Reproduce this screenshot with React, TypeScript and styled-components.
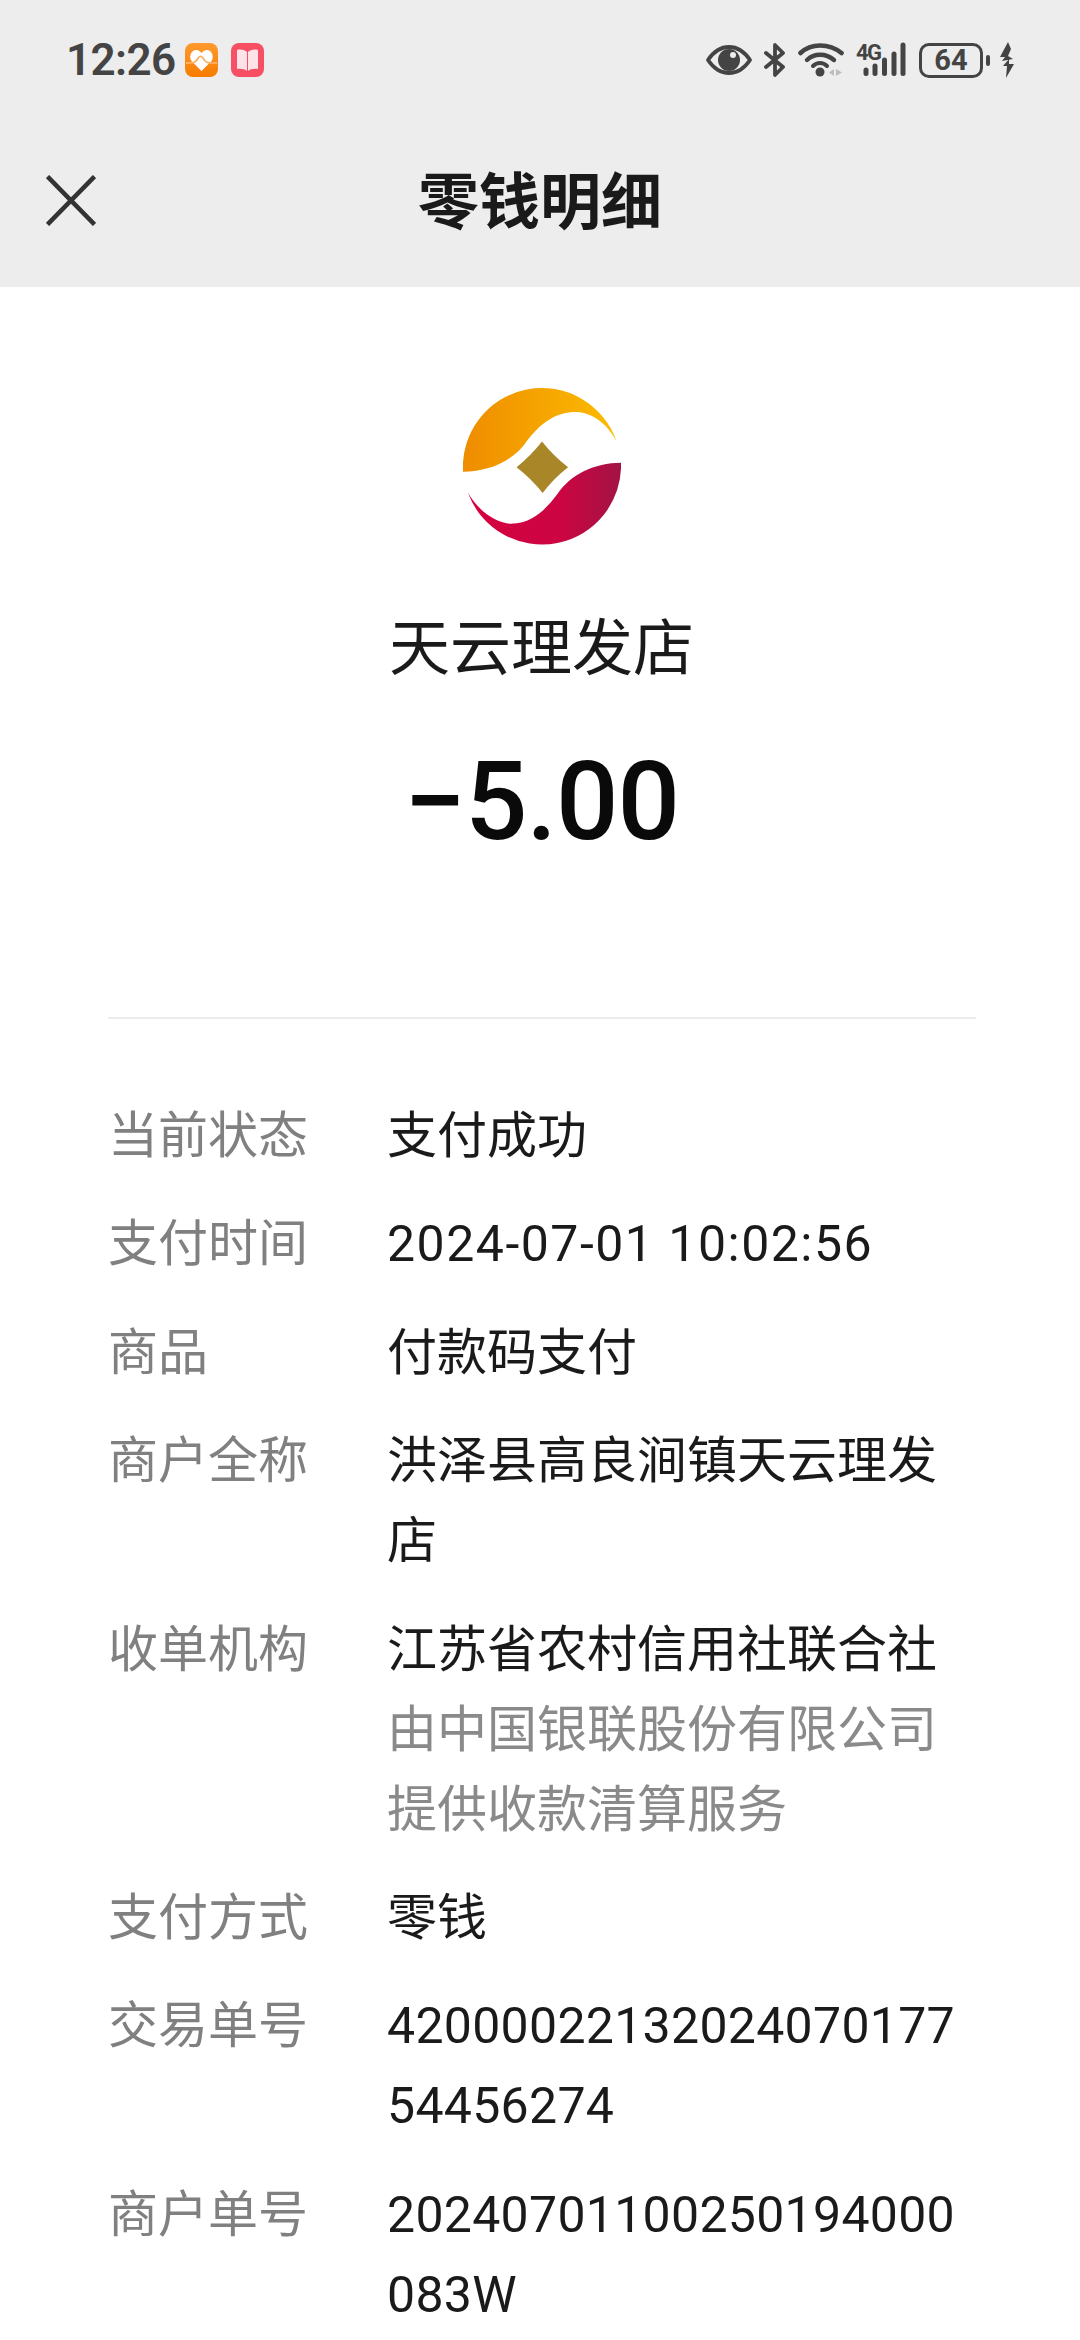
import React from "react";
import styled, { createGlobalStyle } from "styled-components";

const Global = createGlobalStyle`
  html, body { margin: 0; padding: 0; background: #fff; }
  body { font-family: Roboto, "Noto Sans CJK SC", sans-serif; width: 1080px; height: 2340px; overflow: hidden; }
`;
const Page = styled.div`width: 1080px; height: 2340px; overflow: hidden; background: #fff; color: #1a1a1a;`;
const Header = styled.header`background: #ededed; height: 287px; display: flex; flex-direction: column;`;
const StatusBar = styled.div`height: 120px; display: flex; align-items: center; justify-content: space-between; padding: 0 65px 0 66px;`;
const StatusLeft = styled.div`display: flex; align-items: center;`;
const Time = styled.span`font: 600 44px/1 Roboto, sans-serif; letter-spacing: -0.6px; color: #444; margin-right: 9px;`;
const AppIcon = styled.svg`width: 33px; height: 34px; margin-right: 13px; display: block;`;
const StatusRight = styled.div`display: flex; align-items: center;`;
const StatusIcon = styled.svg<{ $gap: number }>`display: block; margin-right: ${p => p.$gap}px;`;
const Net = styled.div`position: relative; width: 50px; height: 36px; margin-right: 13px;`;
const NetLabel = styled.span`position: absolute; left: 0; top: 0; font: 700 22px/1 Roboto, sans-serif; letter-spacing: -1.5px; color: #444;`;
const NetBars = styled.svg`position: absolute; left: 0; top: 0;`;
const Battery = styled.div`width: 64px; height: 35px; box-sizing: border-box; border: 3px solid #444; border-radius: 10px; display: flex; align-items: center; justify-content: center; font: 700 29px/1 Roboto, sans-serif; color: #444; margin-right: 3px;`;
const BatteryNub = styled.div`width: 4px; height: 11px; border-radius: 2px; background: #444; margin-right: 9px;`;
const NavBar = styled.nav`position: relative; height: 167px; display: flex; align-items: center; justify-content: center;`;
const CloseIcon = styled.svg`position: absolute; left: 46px; top: 55px;`;
const Title = styled.h1`margin: 0 0 1px; font: 700 61px/80px Roboto, "Noto Sans CJK SC", sans-serif; color: #1a1a1a;`;
const Hero = styled.section`display: flex; flex-direction: column; align-items: center; padding-top: 101px; padding-left: 3px;`;
const Logo = styled.svg`display: block;`;
const Name = styled.div`margin-top: 63px; font: 400 61px/80px Roboto, "Noto Sans CJK SC", sans-serif; color: #1a1a1a;`;
const Amount = styled.div`margin-top: 53px; font: 500 110px/120px Roboto, sans-serif; letter-spacing: -1px; color: #0a0a0a;`;
const Divider = styled.hr`margin: 155px 104px 0 108px; border: 0; height: 2px; background: #ececec;`;
const Rows = styled.dl`margin: 77px 0 0; padding: 0 108px; display: flex; flex-direction: column; gap: 28.4px;`;
const Row = styled.div`display: grid; grid-template-columns: 279px 1fr; font: 400 50px/80px Roboto, "Noto Sans CJK SC", sans-serif;`;
const Label = styled.dt`color: #808080;`;
const Value = styled.dd<{ $tracking: number }>`margin: 0; color: #1a1a1a; word-break: break-all; letter-spacing: ${p => p.$tracking}px;`;
const Note = styled.div`color: #8a8a8a;`;

const rows: { label: string; value: string; note?: string; tracking?: number }[] = [
  { label: "当前状态", value: "支付成功" },
  { label: "支付时间", value: "2024-07-01 10:02:56", tracking: 1.5 },
  { label: "商品", value: "付款码支付" },
  { label: "商户全称", value: "洪泽县高良涧镇天云理发店" },
  { label: "收单机构", value: "江苏省农村信用社联合社", note: "由中国银联股份有限公司提供收款清算服务" },
  { label: "支付方式", value: "零钱" },
  { label: "交易单号", value: "4200002213202407017754456274", tracking: 0.3 },
  { label: "商户单号", value: "20240701100250194000083W", tracking: 0.3 },
];

export default function App() {
  return (
    <Page>
      <Global />
      <Header>
        <StatusBar>
          <StatusLeft>
            <Time>12:26</Time>
            <AppIcon viewBox="0 0 33 34">
              <defs><linearGradient id="hg" x1="0" y1="0" x2="0" y2="1"><stop offset="0" stopColor="#ff9a30" /><stop offset="1" stopColor="#f57c00" /></linearGradient></defs>
              <rect width="33" height="34" rx="8" fill="url(#hg)" />
              <path d="M16.5 28 L6.5 18 C3.5 14 6 7 11 7 C13.5 7 15.5 8.5 16.5 10 C17.5 8.5 19.5 7 22 7 C27 7 29.5 14 26.5 18Z" fill="#fff" />
              <path d="M1 20 C8 20 10.5 20 12.5 16 C14.5 12.5 17 12.5 19 16.5 C20.5 20 24 20 32 20" fill="none" stroke="#f9b163" strokeWidth="1.8" />
            </AppIcon>
            <AppIcon viewBox="0 0 33 34">
              <rect width="33" height="34" rx="8" fill="#f74f63" />
              <path d="M6 7 C10 6 14 7 16 9 V28 C14 26 10 25.5 6 26Z M27 7 C23 6 19 7 17 9 V28 C19 26 23 25.5 27 26Z" fill="#fde3e7" />
            </AppIcon>
          </StatusLeft>
          <StatusRight>
            <StatusIcon $gap={12} width="46" height="30" viewBox="0 0 46 30">
              <path d="M2 15 C8 6 15 2 23 2 C31 2 38 6 44 15 C38 24 31 28 23 28 C15 28 8 24 2 15Z" fill="none" stroke="#444" strokeWidth="3.8" strokeLinejoin="round" />
              <circle cx="23" cy="15" r="11" fill="#444" />
              <circle cx="27" cy="10" r="3" fill="#ededed" />
            </StatusIcon>
            <StatusIcon $gap={13} width="21" height="34" viewBox="0 0 21 34">
              <path d="M2 10 L19 24 L11 32 V2 L19 10 L2 24" fill="none" stroke="#444" strokeWidth="3.8" strokeLinejoin="round" strokeLinecap="round" />
            </StatusIcon>
            <StatusIcon $gap={12} width="46" height="34" viewBox="0 0 46 34">
              <path d="M2.5 10 C13 0 31 0 43.5 10" fill="none" stroke="#444" strokeWidth="4.6" strokeLinecap="round" />
              <path d="M9 17 C16 10 28 10 36 17" fill="none" stroke="#444" strokeWidth="4.4" strokeLinecap="round" />
              <path d="M15 23 C19 19 25 19 29 23" fill="none" stroke="#444" strokeWidth="4" strokeLinecap="round" />
              <circle cx="22" cy="29" r="4.5" fill="#444" />
              <path d="M36 26 V33 L31 29.5Z M38 26 V33 L44 29.5Z" fill="#bdbdbd" />
            </StatusIcon>
            <Net>
              <NetLabel>4G</NetLabel>
              <NetBars width="50" height="36" viewBox="0 0 50 36">
                <g fill="none" stroke="#444" strokeLinecap="round" strokeWidth="5">
                  <path d="M10 28 V31.5" />
                  <path d="M19 24 V31.5" />
                  <path d="M28.5 18 V31.5" />
                  <path d="M38 12 V31.5" />
                  <path d="M47 3 V31.5" />
                </g>
              </NetBars>
            </Net>
            <Battery>64</Battery>
            <BatteryNub />
            <StatusIcon $gap={0} width="16" height="36" viewBox="0 0 16 36">
              <path d="M9 0 L1 15 H6 L3 19 L14 17 L9 14 L12 7Z M10 17 L4 24 H8 L7 36 L15 22 H10Z" fill="#444" />
            </StatusIcon>
          </StatusRight>
        </StatusBar>
        <NavBar>
          <CloseIcon width="50" height="51" viewBox="0 0 50 51">
            <path d="M1.5 1.5 L48.5 49.5 M48.5 1.5 L1.5 49.5" stroke="#333" strokeWidth="4.5" fill="none" />
          </CloseIcon>
          <Title>零钱明细</Title>
        </NavBar>
      </Header>
      <Hero>
        <Logo width="158" height="158" viewBox="278 83 472 472">
          <defs>
            <linearGradient id="top" x1="0" y1="0" x2="1" y2="0"><stop offset="0" stopColor="#ef8c00" /><stop offset="1" stopColor="#fcbc00" /></linearGradient>
            <linearGradient id="bot" x1="0" y1="0" x2="1" y2="0"><stop offset="0" stopColor="#d60040" /><stop offset="0.6" stopColor="#cc0542" /><stop offset="1" stopColor="#a31345" /></linearGradient>
          </defs>
          <path d="M278 333 A236 236 0 0 1 737 243 C705 180 650 150 605 155 C545 160 505 195 470 240 C430 300 360 332 278 333Z" fill="url(#top)" />
          <path d="M750 306 A236 236 0 0 1 293 397 C330 460 390 492 430 488 C490 484 530 440 560 400 C600 340 670 307 750 306Z" fill="url(#bot)" />
          <path d="M514 243 Q548 286 592 320 Q548 354 516 397 Q482 354 438 320 Q480 286 514 243Z" fill="#a98729" />
        </Logo>
        <Name>天云理发店</Name>
        <Amount>−5.00</Amount>
      </Hero>
      <Divider />
      <Rows>
        {rows.map(r => (
          <Row key={r.label}>
            <Label>{r.label}</Label>
            <Value $tracking={r.tracking ?? 0}>
              {r.value}
              {r.note && <Note>{r.note}</Note>}
            </Value>
          </Row>
        ))}
      </Rows>
    </Page>
  );
}
